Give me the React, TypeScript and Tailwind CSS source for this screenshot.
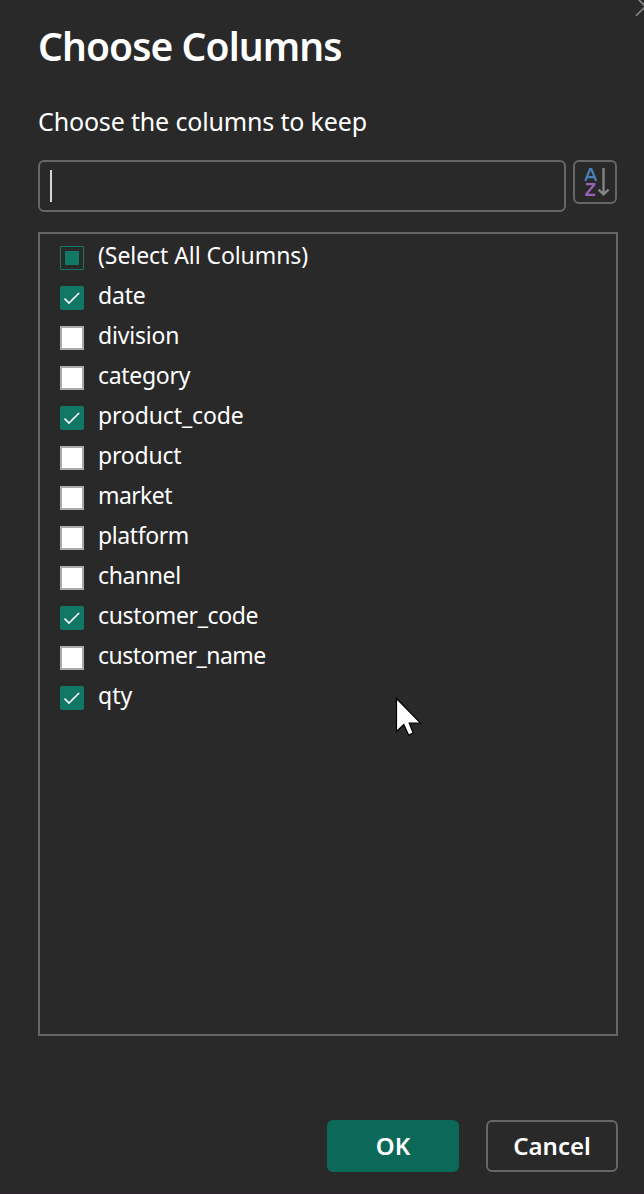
import React from "react";

type State = "some" | "on" | "off";

const columns: { name: string; state: State; spacing: string }[] = [
  { name: "(Select All Columns)", state: "some", spacing: "tracking-[-0.07px]" },
  { name: "date", state: "on", spacing: "tracking-[-0.2px]" },
  { name: "division", state: "off", spacing: "tracking-[-0.2px]" },
  { name: "category", state: "off", spacing: "tracking-[-0.3px]" },
  { name: "product_code", state: "on", spacing: "tracking-[-0.13px]" },
  { name: "product", state: "off", spacing: "tracking-[-0.2px]" },
  { name: "market", state: "off", spacing: "tracking-[-0.6px]" },
  { name: "platform", state: "off", spacing: "tracking-[-0.4px]" },
  { name: "channel", state: "off", spacing: "tracking-[-0.4px]" },
  { name: "customer_code", state: "on", spacing: "tracking-[-0.35px]" },
  { name: "customer_name", state: "off", spacing: "tracking-[-0.5px]" },
  { name: "qty", state: "on", spacing: "tracking-[0px]" },
];

function Checkbox({ state }: { state: State }) {
  if (state === "some") {
    return (
      <span className="flex size-6 shrink-0 items-center justify-center rounded-[1px] border border-[#117865]">
        <span className="size-3.5 bg-[#117865]" />
      </span>
    );
  }
  if (state === "on") {
    return (
      <span className="size-6 shrink-0 rounded-[2px] bg-[#117865]">
        <svg viewBox="0 0 24 24" className="size-6" fill="none" stroke="#f4f8f7" strokeWidth="1.7">
          <path d="M4.5 12.6 L9 17.1 L19.1 7" />
        </svg>
      </span>
    );
  }
  return <span className="size-6 shrink-0 border-2 border-[#ababab] bg-white" />;
}

export default function App() {
  return (
    <div className="relative flex h-[1194px] w-[644px] flex-col overflow-hidden border-b border-[#2b2025] bg-[#292929] pl-[38px] pr-[26px] font-['Noto_Sans',sans-serif] text-white">
      <svg className="absolute left-[634px] top-0 h-[18px] w-[10px]" viewBox="0 0 10 18" fill="none" stroke="#8a8a8a" strokeWidth="1.6">
        <path d="M4 -1 L22 17 M2 15.8 L20 -2.2" />
      </svg>

      <h1 className="mt-[21px] h-[50px] whitespace-nowrap text-[39px] font-semibold leading-[50px] tracking-[-0.93px]">
        Choose Columns
      </h1>
      <p className="mt-[32px] h-[36px] whitespace-nowrap text-[25px] leading-[36px] tracking-[-0.16px]">
        Choose the columns to keep
      </p>

      <div className="mt-[21px] flex items-start justify-between">
        <div className="flex h-[52px] w-[528px] items-center rounded-[6px] border-2 border-[#666666] pl-[10px]">
          <span className="h-8 w-0.5 bg-[#d6d6d6]" />
        </div>
        <button className="mr-[1px] h-11 w-11 rounded-[6px] border-2 border-[#666666]" aria-label="Sort">
          <svg viewBox="0 0 40 40" className="size-10" fill="none">
            <g strokeWidth="2.2">
              <path stroke="#4a80b8" d="M10.3 19 L15 7 L16.4 7 L21.2 19 M12 15.2 H19.6" />
              <path stroke="#9b62b8" d="M11 22.1 H19.2 V22.9 L11.4 32 V32.9 H20.2" />
            </g>
            <path stroke="#868686" strokeWidth="2.3" d="M28.5 6 V32.6 M23.6 27.6 L28.5 32.4 L33.6 27.6" />
          </svg>
        </button>
      </div>

      <ul className="mt-[20px] h-[804px] border-2 border-[#666666] pl-5 pt-1">
        {columns.map((c) => (
          <li key={c.name} className="flex h-10 items-center">
            <Checkbox state={c.state} />
            <span className={`mb-1.5 ml-[14px] whitespace-nowrap text-[23px] leading-8 ${c.spacing}`}>{c.name}</span>
          </li>
        ))}
      </ul>

      <div className="mt-[84px] flex justify-end gap-[27px] text-[24px] font-semibold">
        <button className="flex h-[52px] w-[132px] items-center justify-center rounded-[6px] bg-[#0c695a]">
          OK
        </button>
        <button className="flex h-[52px] w-[132px] items-center justify-center rounded-[6px] border-2 border-[#666666]">
          Cancel
        </button>
      </div>

      <svg className="absolute left-[394px] top-[696px] h-[42px] w-[30px]" viewBox="0 0 30 42">
        <path d="M2.5 2.5 V35.5 L9.8 28.6 L14.6 39 L19.2 37 L15.2 27.2 H26.5 Z" fill="white" stroke="black" strokeWidth="1.2" />
      </svg>
    </div>
  );
}
